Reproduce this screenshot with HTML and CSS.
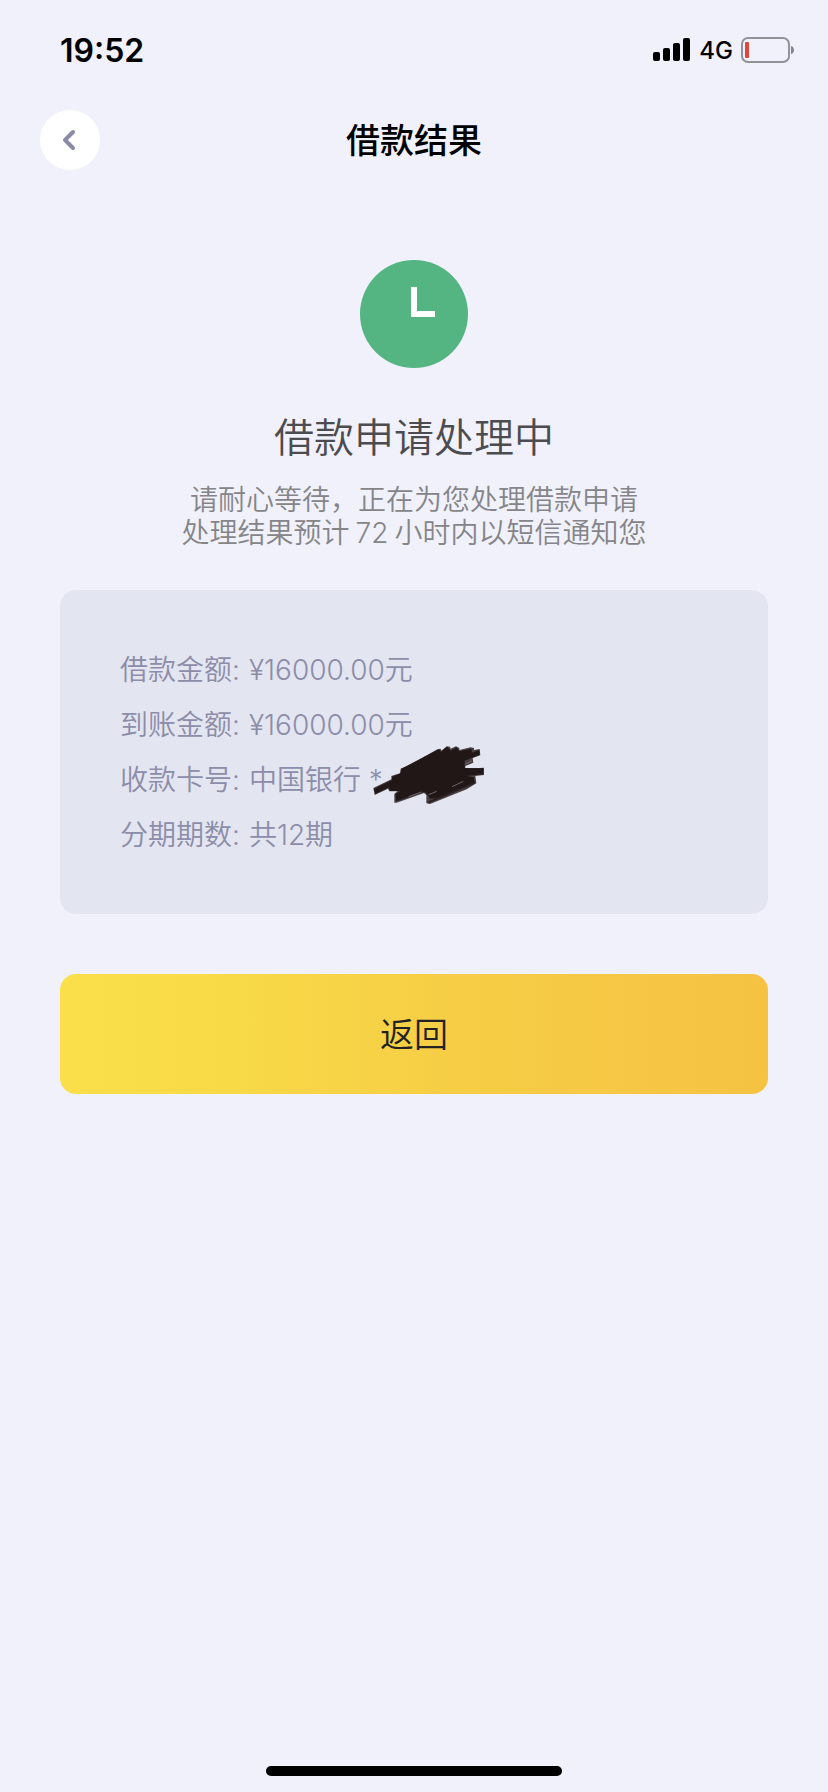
FILE: index.html
```html
<!DOCTYPE html>
<html lang="zh-CN">
<head>
<meta charset="utf-8">
<meta name="viewport" content="width=device-width, initial-scale=1">
<title>借款结果</title>
<link rel="stylesheet" href="styles.css">
</head>
<body>
<div class="screen">
  <div class="status">
    <span class="time">19:52</span>
    <div class="status-right">
      <svg class="signal" width="38" height="24" viewBox="0 0 38 24" aria-hidden="true">
        <rect x="0" y="14" width="7" height="9" rx="2"/>
        <rect x="10" y="10" width="7" height="13" rx="2"/>
        <rect x="20" y="5" width="7" height="18" rx="2"/>
        <rect x="30" y="0" width="7" height="23" rx="2"/>
      </svg>
      <span class="network">4G</span>
      <svg width="54" height="26" viewBox="0 0 54 26" aria-hidden="true">
        <rect x="1" y="1" width="47" height="24" rx="6" fill="none" stroke="#929298" stroke-width="2"/>
        <rect x="4" y="5" width="4" height="16" rx="1" fill="#e0473c"/>
        <path d="M50 9C54 10 54 16 50 17Z" fill="#85858b"/>
      </svg>
    </div>
  </div>
  <header class="header">
    <button class="back" type="button" aria-label="后退">
      <svg width="16" height="22" viewBox="0 0 16 22" aria-hidden="true"><path d="M11 3L3 11L11 19" fill="none" stroke="#8b8ba8" stroke-width="4" stroke-linecap="round" stroke-linejoin="round"/></svg>
    </button>
    <h1 class="title">借款结果</h1>
  </header>
  <main class="main">
    <svg class="clock" width="108" height="108" viewBox="0 0 108 108" aria-hidden="true">
      <circle cx="54" cy="54" r="54" fill="#54b583"/>
      <path d="M51 27H57V51H75V57H51Z" fill="#fff"/>
    </svg>
    <h2 class="heading">借款申请处理中</h2>
    <p class="note">请耐心等待，正在为您处理借款申请<br>处理结果预计<span class="hours">72</span>小时内以短信通知您</p>
    <dl class="card">
      <div class="row"><dt>借款金额:</dt><dd>¥16000.00元</dd></div>
      <div class="row"><dt>到账金额:</dt><dd>¥16000.00元</dd></div>
      <div class="row"><dt>收款卡号:</dt><dd class="masked">中国银行 *
        <svg class="scribble" width="114" height="62" viewBox="66 72 342 186" aria-hidden="true">
          <path d="M70 204L124 178V168L150 160L152 146L178 136L262 88L272 86L274 92L290 79L300 80L302 86L318 79L328 84L328 90L362 82L372 84L372 90L389 87L391 106L368 114L370 128L346 138L346 146L402 143L402 165L376 168L379 190L350 208L240 252L229 250L229 225L222 219L140 248L133 248L133 222L142 214L118 214L114 206L74 225Z" fill="#4a3f41"/>
          <path d="M72 207L126 180V170L152 160L154 146L262 90L270 88L272 96L292 80L302 92L320 82L328 94L364 86L366 98L388 90L389 104L344 122L344 144L400 145L400 163L350 168L372 172L374 188L290 226L264 234L240 236L228 218L220 216L138 244L136 222L150 213L120 213L116 202L76 222Z" fill="#211716"/>
          <path d="M176 230L214 216M236 224L260 214M306 200L340 184M346 132L366 122" fill="none" stroke="#6f6468" stroke-width="3"/>
          <path d="M235 247L374 188" fill="none" stroke="#2b2021" stroke-width="6"/>
        </svg></dd></div>
      <div class="row"><dt>分期期数:</dt><dd>共12期</dd></div>
    </dl>
    <button class="return" type="button">返回</button>
  </main>
  <div class="home"></div>
</div>
</body>
</html>
```
FILE: styles.css
```css
* {
  box-sizing: border-box;
}

body {
  margin: 0;
  background: #f0f1fa;
  font-family: Inter, "Noto Sans CJK SC", sans-serif;
}

h1, h2, p, dl, dd {
  margin: 0;
}

button {
  border: 0;
  padding: 0;
  font-family: inherit;
  cursor: pointer;
}

.screen {
  display: flex;
  flex-direction: column;
  min-height: 100vh;
}

.status {
  display: flex;
  justify-content: space-between;
  align-items: center;
  height: 100px;
  padding: 0 33px 0 60px;
  color: #000;
}

.time {
  font-size: 32px;
  font-weight: 600;
}

.status-right {
  display: flex;
  align-items: center;
  gap: 8px;
}

.network {
  font-size: 24px;
  font-weight: 450;
}

.header {
  display: grid;
  grid-template-columns: 60px 1fr 60px;
  align-items: center;
  height: 80px;
  padding: 0 40px;
}

.back {
  display: flex;
  align-items: center;
  justify-content: center;
  width: 60px;
  height: 60px;
  border-radius: 50%;
  background: #fff;
}

.title {
  padding-top: 2px;
  text-align: center;
  font-size: 34px;
  font-weight: 500;
  line-height: 48px;
  color: #000;
}

.main {
  display: flex;
  flex-direction: column;
  align-items: center;
  flex: 1;
  padding: 80px 60px 60px;
}

.heading {
  margin-top: 40px;
  font-size: 40px;
  font-weight: 350;
  line-height: 60px;
  color: #4c4c50;
}

.note {
  margin-top: 16px;
  text-align: center;
  font-size: 28px;
  font-weight: 350;
  line-height: 33px;
  color: #858589;
}

.hours {
  padding: 0 6px;
}

.card {
  align-self: stretch;
  margin-top: 40px;
  padding: 53px 60px 51px;
  border-radius: 16px;
  background: #e3e5f1;
  font-size: 28px;
  font-weight: 350;
  line-height: 55px;
  color: #8c8da8;
}

.row {
  display: flex;
  gap: 9px;
}

.masked {
  position: relative;
}

.scribble {
  position: absolute;
  left: 123px;
  top: -9px;
}

.return {
  align-self: stretch;
  height: 120px;
  margin-top: 60px;
  padding-bottom: 4px;
  border-radius: 16px;
  background: linear-gradient(90deg, #fade4a, #f8db47 20%, #f6cc45 60%, #f5c242);
  font-size: 34px;
  font-weight: 350;
  color: #222;
}

.home {
  align-self: center;
  width: 296px;
  height: 10px;
  margin-bottom: 16px;
  border-radius: 5px;
  background: #000;
}
```
